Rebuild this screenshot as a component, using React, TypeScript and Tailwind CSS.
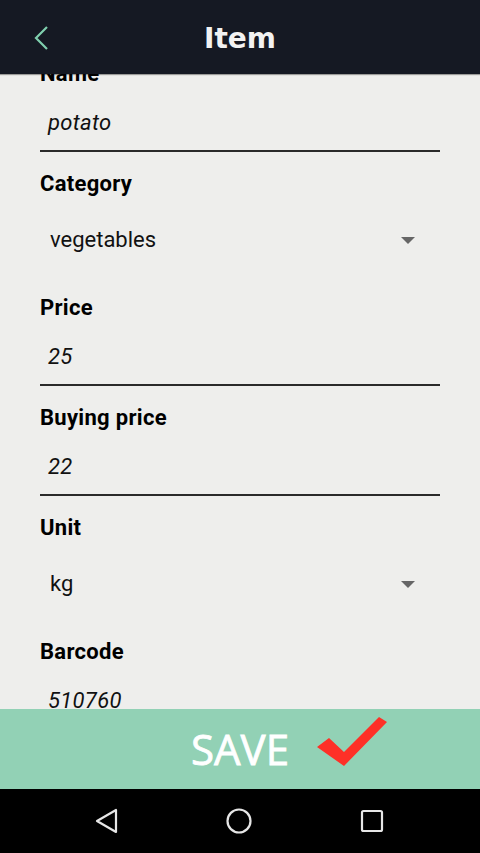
import React from 'react';

type Field =
  | { kind: 'text'; label: string; value: string }
  | { kind: 'select'; label: string; value: string };

const fields: Field[] = [
  { kind: 'text', label: 'Name', value: 'potato' },
  { kind: 'select', label: 'Category', value: 'vegetables' },
  { kind: 'text', label: 'Price', value: '25' },
  { kind: 'text', label: 'Buying price', value: '22' },
  { kind: 'select', label: 'Unit', value: 'kg' },
  { kind: 'text', label: 'Barcode', value: '510760' },
];

function TextField({ label, value }: { label: string; value: string }) {
  return (
    <div className="h-[110px]">
      <div className="text-[22px] leading-[24px] font-bold tracking-[0.3px] text-black">{label}</div>
      <div className="mt-[25px] pl-2 text-[22px] leading-[24px] italic tracking-[0.3px] text-[#111]">{value}</div>
      <div className="mt-[15px] h-[2px] bg-[#2a2a2a]" />
    </div>
  );
}

function SelectField({ label, value }: { label: string; value: string }) {
  return (
    <div className="h-[124px]">
      <div className="text-[22px] leading-[24px] font-bold tracking-[0.3px] text-black">{label}</div>
      <div className="mt-[32px] flex items-center justify-between pl-[10px] pr-[25px]">
        <span className="text-[22px] leading-[24px] text-[#111]">{value}</span>
        <svg width="14" height="7" viewBox="0 0 14 7">
          <polygon points="0,0 14,0 7,7" fill="#666" />
        </svg>
      </div>
    </div>
  );
}

export default function App() {
  return (
    <div className="flex h-[853px] w-[480px] flex-col bg-[#eeeeec] font-['Roboto',sans-serif]">
      {/* Header */}
      <div className="relative z-10 flex h-[74px] shrink-0 items-center justify-center bg-[#151923] pt-[4px] shadow-[0_1px_1px_rgba(0,0,0,0.35)]">
        <button className="absolute left-[33px] top-[26px]">
          <svg width="18" height="24" viewBox="0 0 18 24" fill="none">
            <polyline points="14,1 3,12 14,23" stroke="#7fcfae" strokeWidth="2.2" />
          </svg>
        </button>
        <h1 className="font-['DejaVu_Sans',sans-serif] text-[28px] font-bold text-[#f2f2f2]">Item</h1>
      </div>

      {/* Form */}
      <div className="flex-1 overflow-hidden">
        <div className="mt-[-12px] px-[40px]">
          {fields.map((f) =>
            f.kind === 'text' ? (
              <TextField key={f.label} label={f.label} value={f.value} />
            ) : (
              <SelectField key={f.label} label={f.label} value={f.value} />
            )
          )}
        </div>
      </div>

      {/* Save */}
      <button className="flex h-[80px] shrink-0 items-center justify-center bg-[#92d1b5]">
        <span className="relative font-['Open_Sans',sans-serif] text-[42px] leading-none font-normal text-white [-webkit-text-stroke:0.8px_white]">
          SAVE
          <svg className="absolute left-[125px] top-[-13px]" width="72" height="52" viewBox="314 715 72 52">
            <polygon points="315,747 327,738 342,752 377,717 385,722 342,766" fill="#fe3027" />
          </svg>
        </span>
      </button>

      {/* Nav bar */}
      <div className="flex h-[64px] shrink-0 items-center bg-black">
        <div className="flex w-full justify-between pl-[95px] pr-[95px]">
          <svg width="24" height="28" viewBox="0 0 24 28" fill="none">
            <polygon points="2,14 21,3 21,25" stroke="#e6e6e6" strokeWidth="2.2" strokeLinejoin="round" />
          </svg>
          <svg width="28" height="28" viewBox="0 0 28 28" fill="none">
            <circle cx="14" cy="14" r="11.5" stroke="#e6e6e6" strokeWidth="2.2" />
          </svg>
          <svg width="26" height="28" viewBox="0 0 26 28" fill="none">
            <rect x="3" y="4" width="20" height="20" rx="1.5" stroke="#e6e6e6" strokeWidth="2.2" />
          </svg>
        </div>
      </div>
    </div>
  );
}
